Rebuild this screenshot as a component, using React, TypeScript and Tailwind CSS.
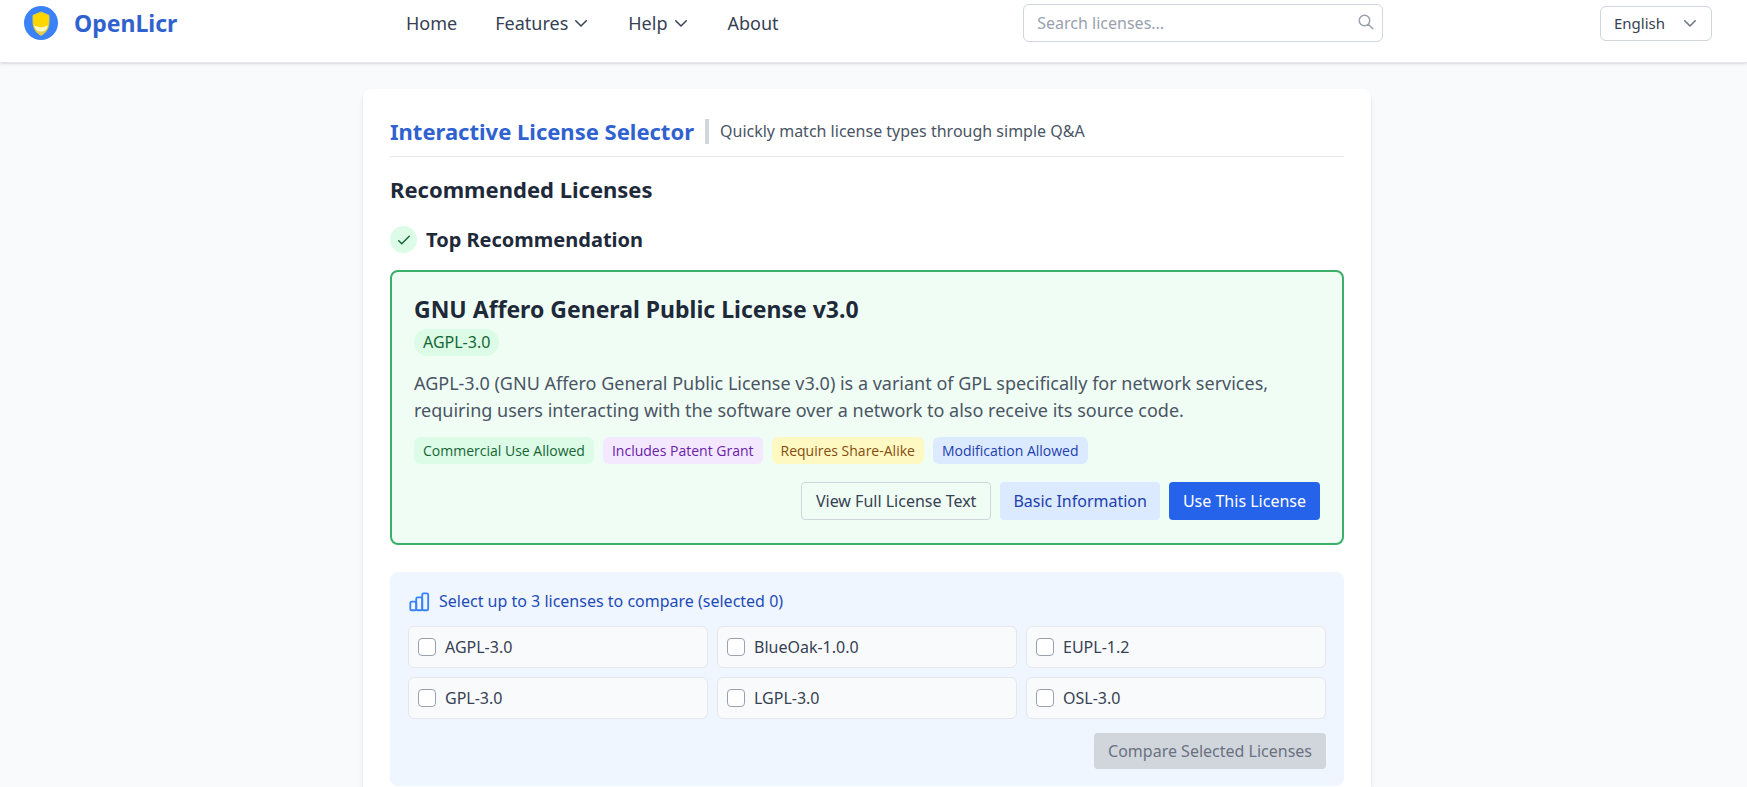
import { useState } from 'react'

interface NavItem {
  href: string
  label: string
  hasMenu?: boolean
}

interface Tag {
  label: string
  className: string
}

const navItems: NavItem[] = [
  { href: '#home', label: 'Home' },
  { href: '#features', label: 'Features', hasMenu: true },
  { href: '#help', label: 'Help', hasMenu: true },
  { href: '#about', label: 'About' },
]

const tags: Tag[] = [
  { label: 'Commercial Use Allowed', className: 'bg-[#dcfce7] text-[#166534]' },
  { label: 'Includes Patent Grant', className: 'bg-[#f3e8ff] text-[#6b21a8]' },
  { label: 'Requires Share-Alike', className: 'bg-[#fef9c3] text-[#854d0e]' },
  { label: 'Modification Allowed', className: 'bg-[#dbeafe] text-[#1e40af]' },
]

const licenses = ['AGPL-3.0', 'BlueOak-1.0.0', 'EUPL-1.2', 'GPL-3.0', 'LGPL-3.0', 'OSL-3.0']

const MAX_COMPARE = 3

function Logo() {
  return (
    <svg viewBox="0 0 34 34" className="w-[34px] h-[34px]" aria-hidden="true">
      <circle cx="17" cy="17" r="17" fill="#3b82f6" />
      <path d="M17 6 L25 9.300 V16 C25 22 22 27 17 29.300 C12 27 9 22 9 16 V9.300 Z" fill="#ffd700" stroke="#d9cc4d" strokeWidth="1" />
      <path d="M10 20 Q17 25 24 20 C23 24.500 20.500 27.500 17 29.300 C13.500 27.500 11 24.500 10 20 Z" fill="#e3cf4a" />
      <path d="M10 19.500 Q17 23 24 19.500 Q22.500 25.500 17 25.500 Q11.500 25.500 10 19.500 Z" fill="#fffbc8" />
    </svg>
  )
}

function StrokeIcon({ d, className }: { d: string; className: string }) {
  return (
    <svg viewBox="0 0 24 24" className={className} fill="none" stroke="currentColor" strokeWidth="2" strokeLinecap="round" strokeLinejoin="round" aria-hidden="true">
      <path d={d} />
    </svg>
  )
}

const chevronPath = 'M19 9l-7 7-7-7'
const searchPath = 'M21 21l-6-6m2-5a7 7 0 11-14 0 7 7 0 0114 0z'
const checkPath = 'M5 13l4 4L19 7'

function Header() {
  return (
    <header className="bg-white border-b border-gray-200 shadow-sm pt-1 pb-5 pl-6 pr-[35px]">
      <div className="flex items-center justify-between">
        <a href="#home" className="flex items-center gap-4">
          <Logo />
          <span className="text-[23px] leading-8 font-bold text-[#2f62cf]">OpenLicr</span>
        </a>

        <nav className="flex items-center gap-[38px] pl-3 pr-7">
          {navItems.map((item) => (
            <a key={item.href} href={item.href} className="flex items-center gap-1 text-lg text-gray-700">
              {item.label}
              {item.hasMenu && <StrokeIcon d={chevronPath} className="w-[18px] h-[18px]" />}
            </a>
          ))}
        </nav>

        <div className="relative w-[360px]">
          <input
            type="text"
            aria-label="Search licenses"
            placeholder="Search licenses..."
            className="w-full h-[38px] rounded-md border border-gray-300 bg-white pl-[13px] pr-9 text-base text-gray-700 placeholder:text-gray-400"
          />
          <StrokeIcon d={searchPath} className="absolute right-2 top-[9px] w-[18px] h-[18px] text-gray-400" />
        </div>

        <div className="relative">
          <select
            aria-label="Language"
            defaultValue="en"
            className="appearance-none w-28 h-[35px] rounded-md border border-gray-300 bg-white pl-[13px] pr-8 text-[15px] text-gray-700"
          >
            <option value="en">English</option>
          </select>
          <StrokeIcon d={chevronPath} className="absolute right-[13px] top-2 w-[18px] h-[18px] text-gray-500 pointer-events-none" />
        </div>
      </div>
    </header>
  )
}

function TopRecommendation() {
  return (
    <section className="rounded-lg border-2 border-[#3bb069] bg-[#f0fdf4] px-[22px] pt-[21px] pb-[23px]">
      <h4 className="text-[23px] leading-8 font-bold text-gray-800">GNU Affero General Public License v3.0</h4>
      <div className="flex mt-1">
        <span className="rounded-full bg-[#dcfce7] px-[9px] text-base leading-[27px] text-[#166534]">AGPL-3.0</span>
      </div>
      <p className="mt-[14px] text-lg leading-[27px] text-gray-600">
        AGPL-3.0 (GNU Affero General Public License v3.0) is a variant of GPL specifically for network services,
        requiring users interacting with the software over a network to also receive its source code.
      </p>
      <div className="mt-[13px] flex flex-wrap gap-[9px] font-['Open_Sans',sans-serif]">
        {tags.map((tag) => (
          <span key={tag.label} className={`rounded-md px-[9px] text-sm leading-[27px] ${tag.className}`}>
            {tag.label}
          </span>
        ))}
      </div>
      <div className="mt-[18px] flex justify-end gap-[9px] text-base">
        <button className="h-[38px] rounded border border-gray-300 px-[14px] text-gray-700">View Full License Text</button>
        <button className="h-[38px] rounded bg-[#dbeafe] px-[13px] text-[#1e40af]">Basic Information</button>
        <button className="h-[38px] rounded bg-[#2563eb] px-[14px] text-white">Use This License</button>
      </div>
    </section>
  )
}

function ComparePanel() {
  const [selected, setSelected] = useState<string[]>([])

  const toggle = (id: string) => {
    setSelected((prev) => {
      if (prev.includes(id)) return prev.filter((item) => item !== id)
      return prev.length < MAX_COMPARE ? [...prev, id] : prev
    })
  }

  return (
    <section className="mt-[27px] rounded-lg bg-[#eff6ff] px-[18px] pt-4 pb-[17px]">
      <div className="flex items-center gap-[9px] text-[#1e4bb8]">
        <svg viewBox="0 0 24 24" className="w-[22px] h-[22px]" fill="none" stroke="#3b82f6" strokeWidth="2" strokeLinejoin="round" aria-hidden="true">
          <rect x="2.500" y="11.500" width="6.500" height="9.500" rx="1.500" />
          <rect x="9" y="7" width="6.500" height="14" rx="1.500" />
          <rect x="15.500" y="2.500" width="6.500" height="18.500" rx="1.500" />
        </svg>
        <h4 className="text-base leading-[27px]">
          Select up to {MAX_COMPARE} licenses to compare (selected {selected.length})
        </h4>
      </div>
      <div className="mt-[11px] grid grid-cols-3 gap-[9px]">
        {licenses.map((id) => (
          <label key={id} className="flex h-[42px] items-center gap-[9px] rounded-md border border-gray-200 bg-gray-50 px-[9px] text-base text-gray-700">
            <input
              type="checkbox"
              checked={selected.includes(id)}
              onChange={() => toggle(id)}
              className="appearance-none w-[18px] h-[18px] rounded border border-gray-400 bg-white checked:bg-blue-600"
            />
            {id}
          </label>
        ))}
      </div>
      <div className="mt-[14px] flex justify-end">
        <button disabled={selected.length < 2} className="h-9 rounded bg-gray-300 px-[14px] text-base text-gray-500">
          Compare Selected Licenses
        </button>
      </div>
    </section>
  )
}

export default function App() {
  return (
    <div className="flex min-h-screen flex-col bg-gray-50 font-['Noto_Sans',sans-serif]">
      <Header />
      <div className="flex flex-1 justify-center pt-[26px] pr-[13px]">
        <main className="w-full max-w-[1008px] rounded-t-lg bg-white px-[27px] pt-[26px] shadow-md">
          <div className="flex items-center gap-[11px] border-b border-gray-200 pb-[9px]">
            <h2 className="text-[22px] leading-8 font-bold text-[#2f62cf]">Interactive License Selector</h2>
            <span className="w-1 h-[25px] bg-gray-300" />
            <p className="text-base text-gray-600">Quickly match license types through simple Q&amp;A</p>
          </div>

          <h3 className="mt-4 text-[22px] leading-8 font-bold text-gray-800">Recommended Licenses</h3>

          <div className="mt-[21px] mb-[17px] flex items-center gap-[9px]">
            <span className="flex w-[27px] h-[27px] items-center justify-center rounded-full bg-[#dcfce7] text-[#166534]">
              <StrokeIcon d={checkPath} className="w-[18px] h-[18px]" />
            </span>
            <h4 className="text-xl leading-[27px] font-bold text-gray-800">Top Recommendation</h4>
          </div>

          <TopRecommendation />
          <ComparePanel />
        </main>
      </div>
    </div>
  )
}
